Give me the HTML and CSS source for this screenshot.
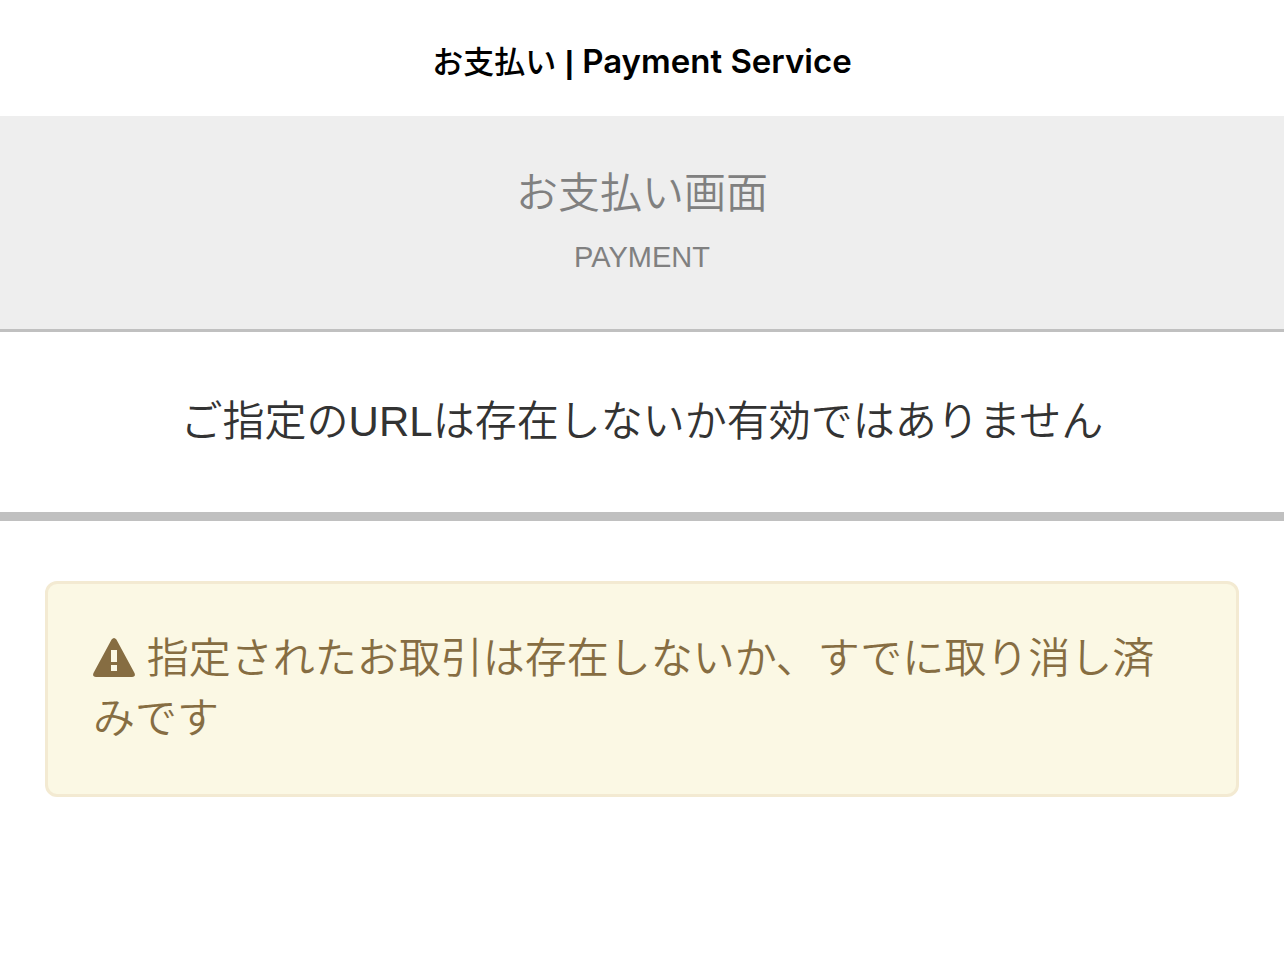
FILE: index.html
```html
<!DOCTYPE html>
<html lang="ja">
<head>
    <meta charset="UTF-8">
    <meta name="viewport" content="width=device-width, initial-scale=1.0">
    <title>お支払い | Payment Service</title>
    <link rel="stylesheet" href="styles.css">
</head>
<body>
    <header class="site-header"><span class="name-ja">お支払い</span> | <span class="name-en">Payment Service</span></header>

    <div class="page-title">
        <h1>お支払い画面</h1>
        <p>PAYMENT</p>
    </div>

    <main>
        <h2 class="message">ご指定のURLは存在しないか有効ではありません</h2>

        <div class="alert" role="alert">
            <svg class="alert-icon" viewBox="0 0 42 39" aria-hidden="true">
                <path fill-rule="evenodd" d="M18.600 1.600Q21-1.400 23.400 1.600L41.500 35Q43 38.800 39 39H3Q-1 38.800.5 35ZM18 12V24H24V12ZM18 27V33H24V27Z"/>
            </svg>
            指定されたお取引は存在しないか、すでに取り消し済みです
        </div>
    </main>
</body>
</html>
```

FILE: styles.css
```css
body {
    margin: 0;
    font-family: "Liberation Sans", "Noto Sans CJK JP", sans-serif;
    font-size: 42px;
    font-weight: 350;
    line-height: 60px;
    color: #333;
    background-color: #fff;
}

.site-header {
    padding: 37px 16px 29px;
    font-size: 31px;
    font-weight: 600;
    line-height: 48px;
    text-align: center;
    color: #000;
}

.name-ja {
    font-weight: 500;
}

.name-en {
    font-family: Inter, sans-serif;
    font-size: 33px;
}

/* グレーの見出し */
.page-title {
    padding: 48px 16px 49px;
    text-align: center;
    color: #808080;
    background-color: #eee;
    border-bottom: 3px solid #c0c0c0;
}

.page-title h1 {
    margin: 0;
    font-size: 42px;
    font-weight: 350;
    line-height: 60px;
}

.page-title p {
    margin: 10px 0 0;
    font-size: 29px;
    line-height: 46px;
}

.message {
    margin: 0;
    padding: 60px 16px;
    font-size: 42px;
    font-weight: 350;
    line-height: 60px;
    text-align: center;
    border-bottom: 9px solid #c0c0c0;
}

/* 警告ボックス */
.alert {
    margin: 60px 45px;
    padding: 45px;
    color: #866d42;
    background-color: #fbf8e4;
    border: 3px solid #f3ead2;
    border-radius: 12px;
}

.alert-icon {
    width: 42px;
    height: 39px;
    fill: currentColor;
    vertical-align: -4px;
}
```
